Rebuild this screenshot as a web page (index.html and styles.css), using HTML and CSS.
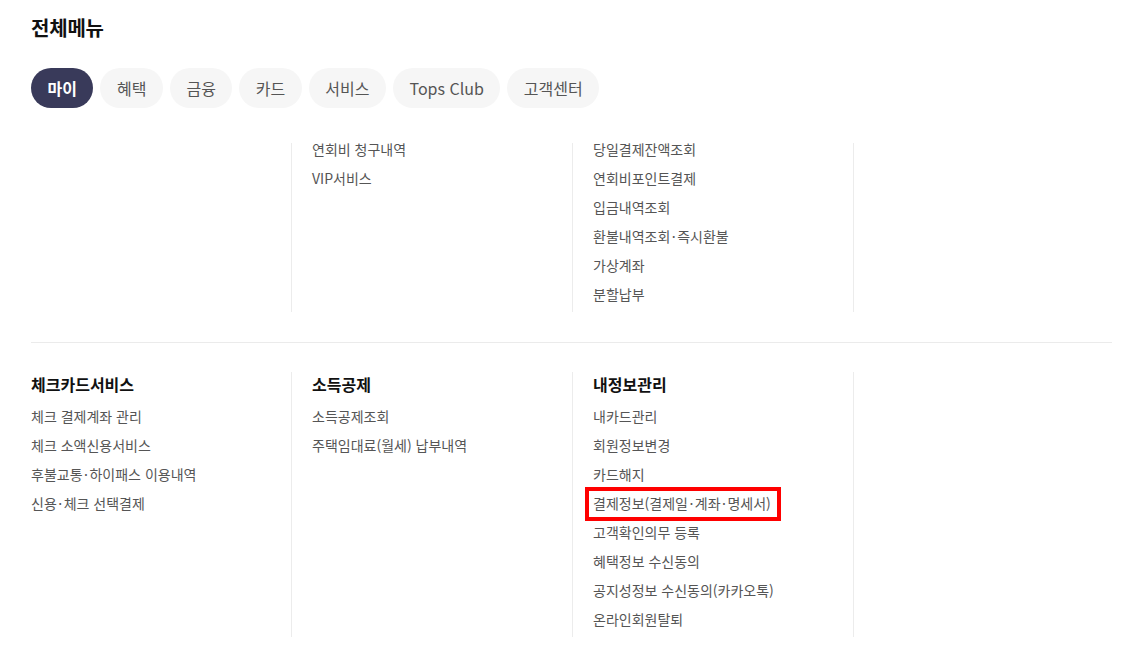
FILE: index.html
```html
<!DOCTYPE html>
<html lang="ko">
<head>
<meta charset="utf-8">
<title>전체메뉴</title>
<link rel="stylesheet" href="styles.css">
</head>
<body>
<div class="page">
  <h1 class="title">전체메뉴</h1>
  <nav class="tabs">
    <span class="tab active">마이</span>
    <span class="tab">혜택</span>
    <span class="tab">금융</span>
    <span class="tab">카드</span>
    <span class="tab">서비스</span>
    <span class="tab">Tops Club</span>
    <span class="tab">고객센터</span>
  </nav>
  <div class="scroller">
    <div class="scroll-inner">
      <section class="group first">
        <div class="col"></div>
        <div class="col">
          <ul class="items">
            <li>연회비 청구내역</li>
            <li>VIP서비스</li>
          </ul>
        </div>
        <div class="col">
          <ul class="items">
            <li>당일결제잔액조회</li>
            <li>연회비포인트결제</li>
            <li>입금내역조회</li>
            <li>환불내역조회<span class="dot">·</span>즉시환불</li>
            <li>가상계좌</li>
            <li>분할납부</li>
          </ul>
        </div>
        <div class="col"></div>
      </section>
      <section class="group">
        <div class="col">
          <h2 class="head">체크카드서비스</h2>
          <ul class="items">
            <li>체크 결제계좌 관리</li>
            <li>체크 소액신용서비스</li>
            <li>후불교통<span class="dot">·</span>하이패스 이용내역</li>
            <li>신용<span class="dot">·</span>체크 선택결제</li>
          </ul>
        </div>
        <div class="col">
          <h2 class="head">소득공제</h2>
          <ul class="items">
            <li>소득공제조회</li>
            <li>주택임대료(월세) 납부내역</li>
          </ul>
        </div>
        <div class="col">
          <h2 class="head">내정보관리</h2>
          <ul class="items">
            <li>내카드관리</li>
            <li>회원정보변경</li>
            <li>카드해지</li>
            <li><span class="mark">결제정보(결제일<span class="dot">·</span>계좌<span class="dot">·</span>명세서)</span></li>
            <li>고객확인의무 등록</li>
            <li>혜택정보 수신동의</li>
            <li>공지성정보 수신동의(카카오톡)</li>
            <li>온라인회원탈퇴</li>
          </ul>
        </div>
        <div class="col"></div>
      </section>
    </div>
  </div>
</div>
</body>
</html>
```

FILE: styles.css
```css
* { box-sizing: border-box; }
html, body { margin: 0; padding: 0; background: #fff; }
body {
  font-family: "Noto Sans CJK KR", "Noto Sans", sans-serif;
  color: #111;
  overflow: hidden;
}
.page {
  padding: 0 9px 0 31px;
  height: 655px;
  display: flex;
  flex-direction: column;
}
.title {
  margin: 13px 0 0;
  font-size: 20px;
  line-height: 30px;
  font-weight: 700;
  color: #111;
  letter-spacing: -0.2px;
}
.tabs {
  display: flex;
  gap: 7px;
  margin-top: 25px;
}
.tab {
  height: 40px;
  line-height: 40px;
  padding: 0 16.5px;
  border-radius: 20px;
  background: #f6f6f6;
  color: #555;
  font-size: 16px;
  white-space: nowrap;
}
.tab.active {
  background: #393a5a;
  color: #fff;
  font-weight: 700;
}
.scroller {
  margin-top: 35px;
  flex: 1;
  overflow: hidden;
}
.scroll-inner {
  margin-top: -8.5px;
}
.group {
  display: grid;
  grid-template-columns: 260px 281px 281px 1fr;
  border-top: 1px solid #ebebeb;
  padding-top: 29px;
  margin-bottom: 30px;
}
.group.first {
  border-top: 0;
  padding-top: 0;
}
.col {
  padding-bottom: 3px;
}
.col + .col {
  border-left: 1px solid #ececec;
  padding-left: 20px;
}
.head {
  margin: 0 0 6px;
  font-size: 16px;
  line-height: 24px;
  font-weight: 700;
  color: #111;
}
.items {
  list-style: none;
  margin: 0;
  padding: 0;
}
.items li {
  font-size: 14px;
  line-height: 29px;
  color: #555;
}
.dot {
  padding: 0 1.5px;
}
.mark {
  position: relative;
  display: inline-block;
}
.mark::after {
  content: "";
  position: absolute;
  left: -8px;
  right: -10px;
  top: -2px;
  bottom: -3px;
  border: 4px solid #ff0000;
}
```
